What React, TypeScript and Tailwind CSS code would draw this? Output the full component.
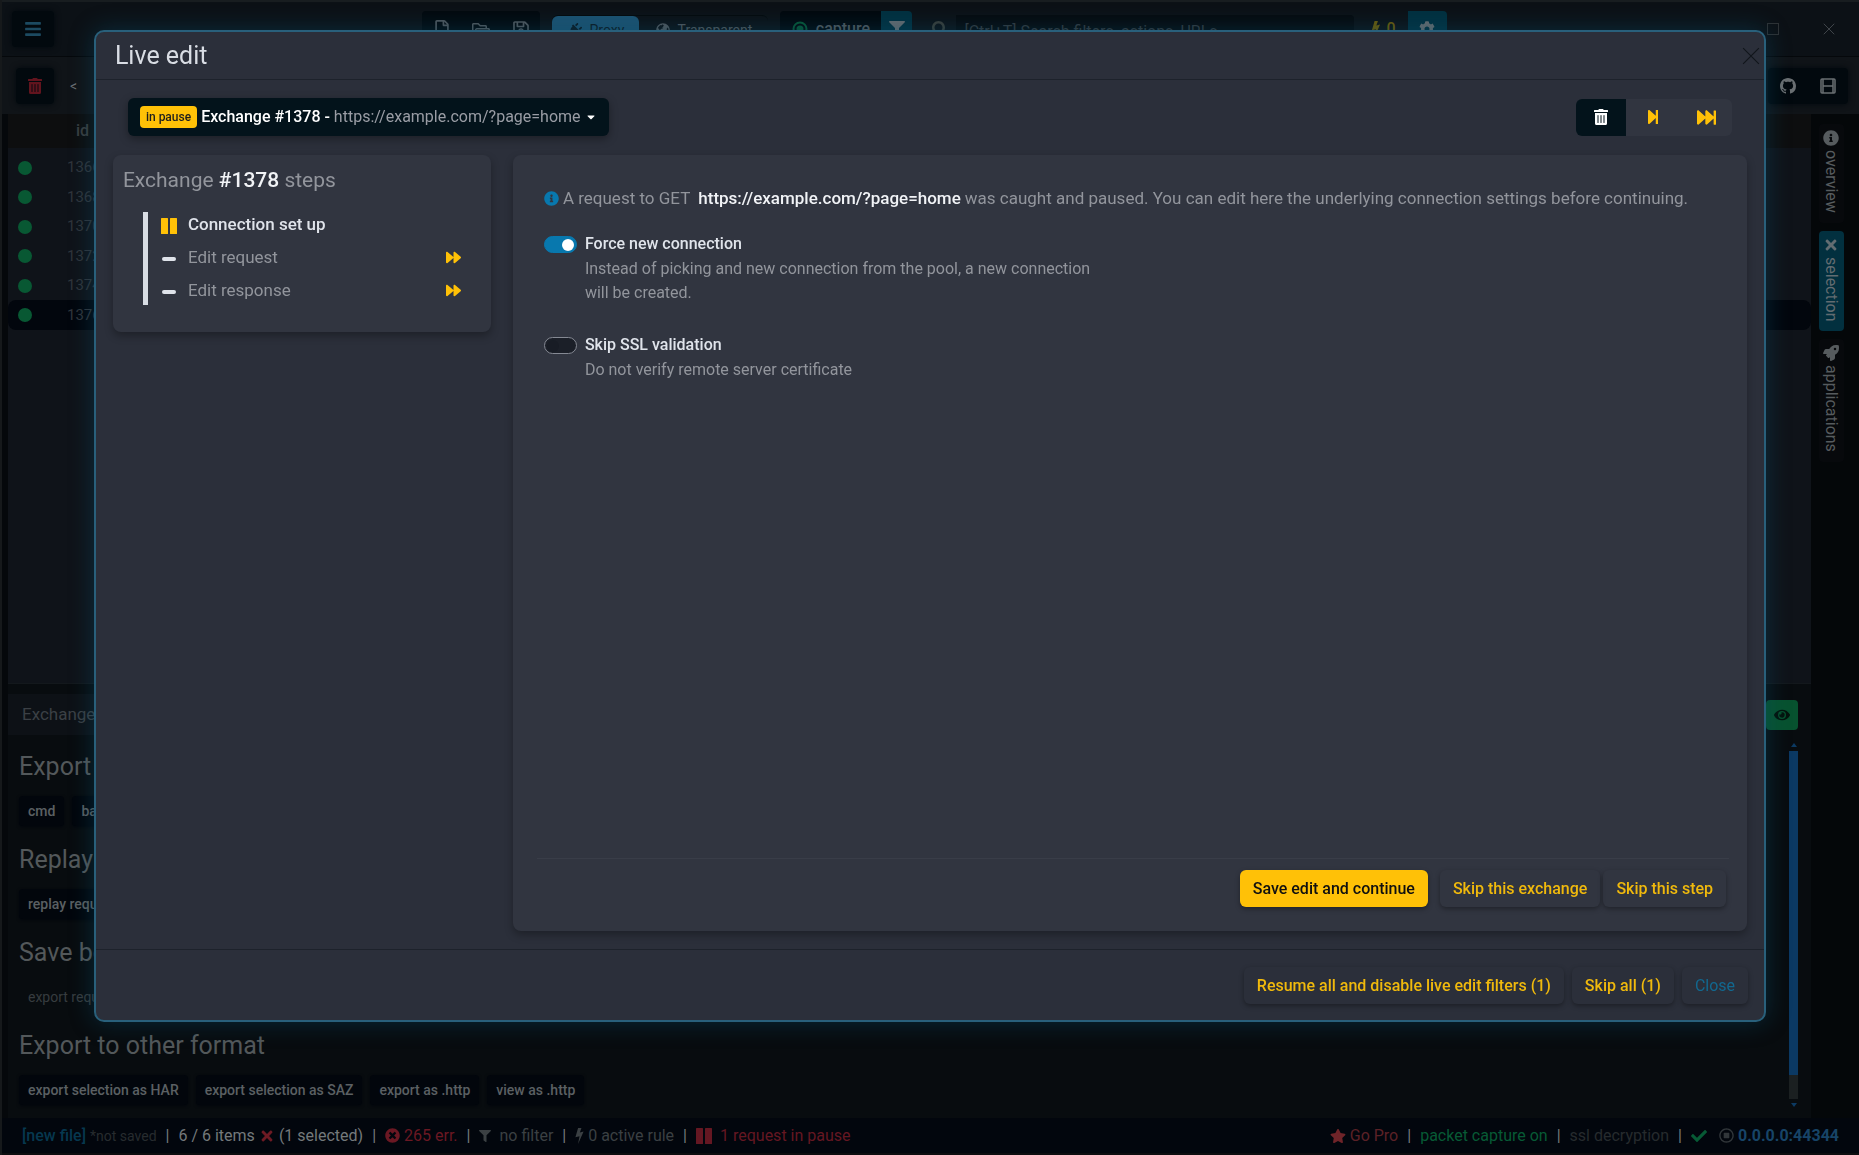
import { useState, type ReactNode } from "react";
import {
    FaBars,
    FaCaretDown,
    FaCheck,
    FaCog,
    FaEye,
    FaFastForward,
    FaFilter,
    FaForward,
    FaGlobeAmericas,
    FaInfoCircle,
    FaPlug,
    FaRegFile,
    FaRegFolderOpen,
    FaRegSave,
    FaRegStopCircle,
    FaRocket,
    FaSearch,
    FaStar,
    FaStepForward,
    FaTimes,
    FaTimesCircle,
    FaTrashAlt,
} from "react-icons/fa";
import { BsGithub } from "react-icons/bs";

const EXCHANGE_URL = "https://example.com/?page=home";

const rows = ["1366", "1368", "1370", "1372", "1374", "1376"];

const steps = [
    { label: "Connection set up", active: true },
    { label: "Edit request", active: false },
    { label: "Edit response", active: false },
];

const exportSections = [
    { title: "Export as", disabled: false, actions: ["cmd", "bash"] },
    { title: "Replay", disabled: false, actions: ["replay request"] },
    { title: "Save body", disabled: true, actions: ["export request body"] },
    {
        title: "Export to other format",
        disabled: false,
        actions: ["export selection as HAR", "export selection as SAZ", "export as .http", "view as .http"],
    },
];

function BoltIcon({ className }: { className?: string }) {
    return (
        <svg viewBox="0 0 10 18" fill="currentColor" className={className} aria-hidden="true">
            <path d="M3.4 0h3.8L5.4 5l4.2-1L3.4 18 5 9.2.4 10.3z" />
        </svg>
    );
}

function PauseIcon({ className }: { className?: string }) {
    return (
        <svg viewBox="0 0 16 16" fill="currentColor" className={className} aria-hidden="true">
            <rect x="0" y="0" width="7" height="16" rx="0.5" />
            <rect x="9" y="0" width="7" height="16" rx="0.5" />
        </svg>
    );
}

function CrossIcon({ className }: { className?: string }) {
    return (
        <svg viewBox="0 0 16 16" stroke="currentColor" strokeWidth="1" className={className} aria-hidden="true">
            <path d="M1 1l14 14M15 1L1 15" />
        </svg>
    );
}

function SplitIcon({ className }: { className?: string }) {
    return (
        <svg viewBox="0 0 16 16" fill="none" stroke="currentColor" strokeWidth="1.5" className={className} aria-hidden="true">
            <rect x="1" y="1" width="14" height="14" rx="1" />
            <path d="M3 8h10M3 1v14M13 1v14" />
        </svg>
    );
}

function TargetIcon({ className }: { className?: string }) {
    return (
        <svg viewBox="0 0 16 16" fill="none" stroke="currentColor" strokeWidth="2" className={className} aria-hidden="true">
            <circle cx="8" cy="8" r="6.5" />
            <circle cx="8" cy="8" r="2.5" fill="currentColor" />
        </svg>
    );
}

function TitleBar() {
    return (
        <header className="flex h-[57px] shrink-0 items-start border-t-2 border-b border-t-[#181d20] border-b-[#05080b] bg-[#0c1116] pt-[9px] pr-6 pl-[10px] text-[#50565b]">
            <button aria-label="Menu" className="flex h-9 w-[42px] items-center justify-center rounded bg-[#02090e] text-lg text-[#1c4a61] shadow-[0_0_6px_#02090e]">
                <FaBars />
            </button>
            <div className="flex flex-1 justify-center gap-3 pl-12">
                <div className="flex h-9 w-[118px] items-center justify-around rounded bg-[#03090e] text-lg">
                    <button aria-label="New file"><FaRegFile /></button>
                    <button aria-label="Open file"><FaRegFolderOpen /></button>
                    <button aria-label="Save file"><FaRegSave /></button>
                </div>
                <div className="mt-1 flex h-8 w-[216px] rounded-md border-t border-[#05090c] text-sm">
                    <button className="flex w-[87px] items-center justify-center gap-2 rounded-md bg-[#1c5271] pb-1 text-[#0c1a24]">
                        <FaPlug className="rotate-45" />
                        Proxy
                    </button>
                    <button className="flex flex-1 items-center justify-center gap-2 pb-1">
                        <FaGlobeAmericas />
                        Transparent
                    </button>
                </div>
                <div className="flex h-9 w-[132px] overflow-hidden rounded">
                    <button className="flex flex-1 items-center justify-center gap-2 bg-[#02080d] font-medium">
                        <TargetIcon className="size-4 text-[#075534]" />
                        capture
                    </button>
                    <button aria-label="Capture filter" className="flex w-[31px] items-center justify-center bg-[#02303f] text-[#656b6e]">
                        <FaFilter />
                    </button>
                </div>
                <div className="flex h-9 w-[430px] items-center gap-2 pl-2">
                    <FaSearch className="text-[#3a3d38]" />
                    <input
                        aria-label="Search"
                        placeholder="[Ctrl+T] Search filters, actions, URLs"
                        className="mt-1 h-8 min-w-0 flex-1 rounded-r bg-[#060a0e] pl-2 placeholder:text-[#33383d]"
                    />
                </div>
                <div className="flex h-9 items-center gap-2 text-[#6b5a08]">
                    <span className="flex items-center gap-1 px-1 font-medium">
                        <BoltIcon className="h-4 w-3" />0
                    </span>
                    <button aria-label="Rules" className="flex h-9 w-[39px] items-center justify-center rounded-r bg-[#02303f] text-[#656b6e]">
                        <FaCog />
                    </button>
                </div>
            </div>
            <div className="flex h-9 items-center gap-11">
                <button aria-label="Maximize" className="size-3 border border-[#2e3235]" />
                <button aria-label="Close window"><CrossIcon className="size-3 text-[#50565b]" /></button>
            </div>
        </header>
    );
}

function Toolbar() {
    return (
        <div className="flex h-[57px] shrink-0 items-center justify-between bg-[#101418] pr-[11px] pl-[14px] text-[#6a6f72]">
            <div className="flex items-center gap-4">
                <button aria-label="Delete" className="flex h-9 w-[38px] items-center justify-center rounded bg-[#02090e] text-[#62141e] shadow-[0_0_6px_#02090e]">
                    <FaTrashAlt />
                </button>
                <button className="text-sm">&lt;</button>
            </div>
            <div className="flex h-9 items-center gap-6 rounded bg-[#02090e] px-3 shadow-[0_0_6px_#02090e]">
                <a href="#github" aria-label="GitHub"><BsGithub className="size-4" /></a>
                <button aria-label="Layout"><SplitIcon className="size-4" /></button>
            </div>
        </div>
    );
}

function ExchangeTable() {
    return (
        <div className="min-h-0 flex-1 overflow-hidden bg-[#0f1319]">
            <table className="w-full text-[15px] text-[#30353b]">
                <thead>
                    <tr className="h-[34px] bg-[#0d0e0f] text-base text-[#3a3e40]">
                        <th className="w-14" aria-label="status" />
                        <th className="pl-3 text-left font-medium">id</th>
                    </tr>
                </thead>
                <tbody className="before:block before:h-[5px]">
                    {rows.map((id) => (
                        <tr key={id} className={id === "1376" ? "h-[30px] bg-[#02060d]" : "h-[29px] even:h-[30px]"}>
                            <td className="rounded-l-lg pl-[10px]">
                                <span className="block size-[14px] rounded-full bg-[#085833]" />
                            </td>
                            <td className="rounded-r-lg pl-[3px]">{id}</td>
                        </tr>
                    ))}
                </tbody>
            </table>
        </div>
    );
}

function DetailPanel() {
    return (
        <section className="flex h-[435px] shrink-0 border-t border-[#13181c] bg-[#080c0f] pt-[10px] pr-[13px]">
            <div className="min-w-0 flex-1">
                <div className="flex items-center justify-between">
                    <div className="flex h-[41px] w-40 items-center bg-[#0d1116] pl-[14px] text-[17px] text-[#3b4045]">Exchange</div>
                    <button aria-label="View" className="flex h-[30px] w-8 items-center justify-center rounded bg-[#07522f] text-[#04130c]">
                        <FaEye />
                    </button>
                </div>
                <div className="flex">
                    <div className="flex flex-1 flex-col gap-4 pt-[14px] pl-[11px]">
                        {exportSections.map((section) => (
                            <div key={section.title}>
                                <h2 className="mb-[11px] text-[25px] leading-9 text-[#53585a]">{section.title}</h2>
                                <div className="flex gap-2">
                                    {section.actions.map((action) => (
                                        <button
                                            key={action}
                                            disabled={section.disabled}
                                            className="h-[30px] rounded bg-[#02060c] px-[9px] text-sm font-medium text-[#5b6063] shadow-[0_1px_3px_#02060c] disabled:bg-transparent disabled:font-normal disabled:text-[#373c3f] disabled:shadow-none"
                                        >
                                            {action}
                                        </button>
                                    ))}
                                </div>
                            </div>
                        ))}
                    </div>
                    <div className="mt-2 flex h-[364px] w-[9px] flex-col items-center">
                        <svg viewBox="0 0 6 4" className="mb-1 h-1 w-[6px] fill-[#0c3a62]"><path d="M3 0l3 4H0z" /></svg>
                        <div className="w-full flex-1 bg-[#1b2021]">
                            <div className="h-[93%] bg-[#0b3963]" />
                        </div>
                        <svg viewBox="0 0 6 4" className="mt-1 h-1 w-[6px] fill-[#0c3a62]"><path d="M3 4l3-4H0z" /></svg>
                    </div>
                </div>
            </div>
        </section>
    );
}

function SideTab({ icon, label, active }: { icon: ReactNode; label: string; active?: boolean }) {
    return (
        <button
            className={
                active
                    ? "flex w-[25px] flex-col items-center gap-1 rounded bg-[#02303f] pt-[6px] pb-[10px] text-[#626c71]"
                    : "flex w-[25px] flex-col items-center gap-1 rounded bg-[#07090c] pt-[6px] pb-[10px] text-[#565b5e]"
            }
        >
            {icon}
            <span className="leading-[17px] [writing-mode:vertical-rl]">{label}</span>
        </button>
    );
}

function Divider() {
    return <span className="mx-[9px] text-[#74797b]">|</span>;
}

function StatusBar() {
    return (
        <footer className="flex h-[37px] shrink-0 items-center justify-between border-b-2 border-[#0c0d0f] bg-[#02060d] px-5 whitespace-nowrap">
            <div className="flex items-center text-[#3b4043]">
                <a href="#file" className="font-medium text-[#06384f]">[new file]</a>
                <span className="ml-1 text-sm text-[#272c2f]">*not saved</span>
                <Divider />
                <span className="text-[#74797b]">6 / 6 items</span>
                <FaTimes className="mx-1 text-[#6e1a24]" />
                <span className="text-[#74797b]">(1 selected)</span>
                <Divider />
                <span className="flex items-center gap-1 text-[#6b1823]"><FaTimesCircle className="size-[15px]" />265 err.</span>
                <Divider />
                <FaFilter className="mr-2 size-3" />
                no filter
                <Divider />
                <BoltIcon className="mr-1 h-4 w-[9px]" />0 active rule
                <Divider />
                <span className="flex items-center gap-2 text-[#651722]"><PauseIcon className="size-4" />1 request in pause</span>
            </div>
            <div className="flex items-center">
                <a href="#pro" className="flex items-center gap-1 text-[#5b2127]"><FaStar className="text-[#6f2429]" />Go Pro</a>
                <Divider />
                <span className="text-[#075a35]">packet capture on</span>
                <Divider />
                <span className="text-[#262b2e]">ssl decryption</span>
                <Divider />
                <FaCheck className="mr-3 text-[#075a35]" />
                <FaRegStopCircle className="mr-1 size-[15px] text-[#31363a]" />
                <span className="font-bold text-[#174467]">0.0.0.0:44344</span>
            </div>
        </footer>
    );
}

function Toggle({ id, label, children, checked, onChange }: { id: string; label: string; children: ReactNode; checked: boolean; onChange: (v: boolean) => void }) {
    return (
        <div className="flex gap-2">
            <input
                id={id}
                type="checkbox"
                role="switch"
                checked={checked}
                onChange={(e) => onChange(e.target.checked)}
                className="mt-1 flex h-[17px] w-[33px] shrink-0 appearance-none items-center rounded-full border border-[#858993] bg-[#1b1f28] px-[2px] before:size-3 before:rounded-full before:bg-[#181c25] checked:justify-end checked:border-[#0878ae] checked:bg-[#0878ae] checked:before:bg-white"
            />
            <div className="max-w-[528px]">
                <label htmlFor={id} className="mb-px block font-medium text-[#e0e4eb]">{label}</label>
                <p className="text-[#92959c]">{children}</p>
            </div>
        </div>
    );
}

function StepsPanel() {
    return (
        <aside className="w-[378px] shrink-0 self-start rounded-lg bg-[#313540] px-[10px] pt-3 pb-[27px] shadow-[0_4px_8px_rgba(0,0,0,0.3)]">
            <h2 className="mb-[18px] text-[21px] leading-[27px] text-[#92959c]">
                Exchange <strong className="font-medium text-[#f1f3f6]">#1378</strong> steps
            </h2>
            <ol className="mx-5 flex flex-col gap-[9px] border-l-[5px] border-[#d8dde4] pb-[3px] pl-[13px] text-[17px] leading-6">
                {steps.map((step) => (
                    <li key={step.label} className="flex items-center">
                        {step.active ? (
                            <PauseIcon className="mt-1 mr-[11px] size-4 text-[#ffc107]" />
                        ) : (
                            <span className="mt-1 mr-3 ml-px h-1 w-[14px] rounded-sm bg-[#dfe3ea]" />
                        )}
                        <span className={step.active ? "font-medium text-[#dfe3ea]" : "text-[#92959c]"}>{step.label}</span>
                        {!step.active && (
                            <button aria-label={`Skip to ${step.label}`} className="ml-auto text-[#ffc107]">
                                <FaForward className="size-[15px]" />
                            </button>
                        )}
                    </li>
                ))}
            </ol>
        </aside>
    );
}

const softButton = "h-[37px] rounded-md px-[13px] font-medium shadow-[0_2px_5px_rgba(0,0,0,0.35)]";

function LiveEditModal() {
    const [forceNew, setForceNew] = useState(true);
    const [skipSsl, setSkipSsl] = useState(false);

    return (
        <div className="fixed inset-0 flex justify-center pt-[30px] pb-[133px] pl-px">
            <div
                role="dialog"
                aria-labelledby="live-edit-title"
                className="flex w-[90%] flex-col rounded-[10px] border-2 border-[#29607b] bg-[#2b2f3a] shadow-[0_0_24px_rgba(8,80,110,0.45)]"
            >
                <div className="flex h-12 shrink-0 items-center justify-between border-b border-[#1d222b] pr-1 pl-[19px]">
                    <h1 id="live-edit-title" className="text-[25px] leading-8 text-[#d9dde4]">Live edit</h1>
                    <button aria-label="Close dialog"><CrossIcon className="size-[18px] text-[#11151b]" /></button>
                </div>

                <div className="flex min-h-0 flex-1 flex-col px-[17px] pt-[18px] pb-[18px]">
                    <div className="mb-[19px] flex items-center justify-between px-[15px]">
                        <button className="flex h-[38px] items-center rounded-md bg-[#03131b] px-3 shadow-[0_3px_8px_rgba(0,0,0,0.35)]">
                            <span className="mr-1 rounded-sm bg-[#ffc107] px-[6px] text-xs leading-[22px] font-medium text-[#1d1d1d]">in pause</span>
                            <span className="font-medium whitespace-pre text-white">Exchange #1378 - </span>
                            <span className="text-[#9a9da5]">{EXCHANGE_URL}</span>
                            <FaCaretDown className="ml-1 size-3 text-white" />
                        </button>
                        <div className="flex h-[37px] overflow-hidden rounded-md bg-[#313540] text-[#ffc107]">
                            <button aria-label="Discard" className="flex w-[50px] items-center justify-center bg-[#03131b] text-white"><FaTrashAlt /></button>
                            <button aria-label="Next step" className="flex w-[54px] items-center justify-center"><FaStepForward /></button>
                            <button aria-label="Run to end" className="flex w-[52px] items-center justify-center"><FaFastForward className="size-[19px]" /></button>
                        </div>
                    </div>

                    <div className="flex min-h-0 flex-1 gap-[22px]">
                        <StepsPanel />
                        <div className="flex flex-1 flex-col rounded-lg bg-[#313540] pt-[31px] pr-[18px] pb-6 pl-6 shadow-[0_4px_8px_rgba(0,0,0,0.3)]">
                            <p className="mb-[22px] flex items-center px-[7px] text-[17px] leading-6 text-[#92959c]">
                                <FaInfoCircle className="mr-1 size-[15px] text-[#0878ae]" />
                                A request to GET
                                <strong className="mr-1 ml-2 font-medium text-[#f1f3f6]">{EXCHANGE_URL}</strong>
                                was caught and paused. You can edit here the underlying connection settings before continuing.
                            </p>
                            <div className="flex flex-1 flex-col gap-7 px-[7px]">
                                <Toggle id="force-new" label="Force new connection" checked={forceNew} onChange={setForceNew}>
                                    Instead of picking and new connection from the pool, a new connection will be created.
                                </Toggle>
                                <Toggle id="skip-ssl" label="Skip SSL validation" checked={skipSsl} onChange={setSkipSsl}>
                                    Do not verify remote server certificate
                                </Toggle>
                            </div>
                            <div className="flex justify-end border-t border-[#393d48] pt-[11px] pr-[3px] text-[#f0b90c]">
                                <button className={`${softButton} mr-3 bg-[#ffc107] text-[#101010]`}>Save edit and continue</button>
                                <button className={`${softButton} mr-[3px]`}>Skip this exchange</button>
                                <button className={softButton}>Skip this step</button>
                            </div>
                        </div>
                    </div>
                </div>

                <div className="flex h-[71px] shrink-0 items-start justify-end gap-2 border-t border-[#1d222b] pt-[17px] pr-4 text-[#f0b90c]">
                    <button className={softButton}>Resume all and disable live edit filters (1)</button>
                    <button className={softButton}>Skip all (1)</button>
                    <button className="h-[37px] rounded-md px-[13px] text-[#12688f] shadow-[0_2px_5px_rgba(0,0,0,0.35)]">Close</button>
                </div>
            </div>
        </div>
    );
}

export default function App() {
    return (
        <div className="flex h-screen flex-col overflow-hidden border-l-2 border-[#16191b] bg-[#05080b] font-['Roboto',sans-serif] text-base">
            <TitleBar />
            <Toolbar />
            <div className="flex min-h-0 flex-1">
                <main className="flex min-w-0 flex-1 flex-col pl-[6px]">
                    <ExchangeTable />
                    <DetailPanel />
                </main>
                <nav className="flex w-12 flex-col items-center gap-2 bg-[#040709] pt-[10px] pr-2">
                    <SideTab icon={<FaInfoCircle />} label="overview" />
                    <SideTab icon={<FaTimes />} label="selection" active />
                    <SideTab icon={<FaRocket />} label="applications" />
                </nav>
            </div>
            <StatusBar />
            <LiveEditModal />
        </div>
    );
}
